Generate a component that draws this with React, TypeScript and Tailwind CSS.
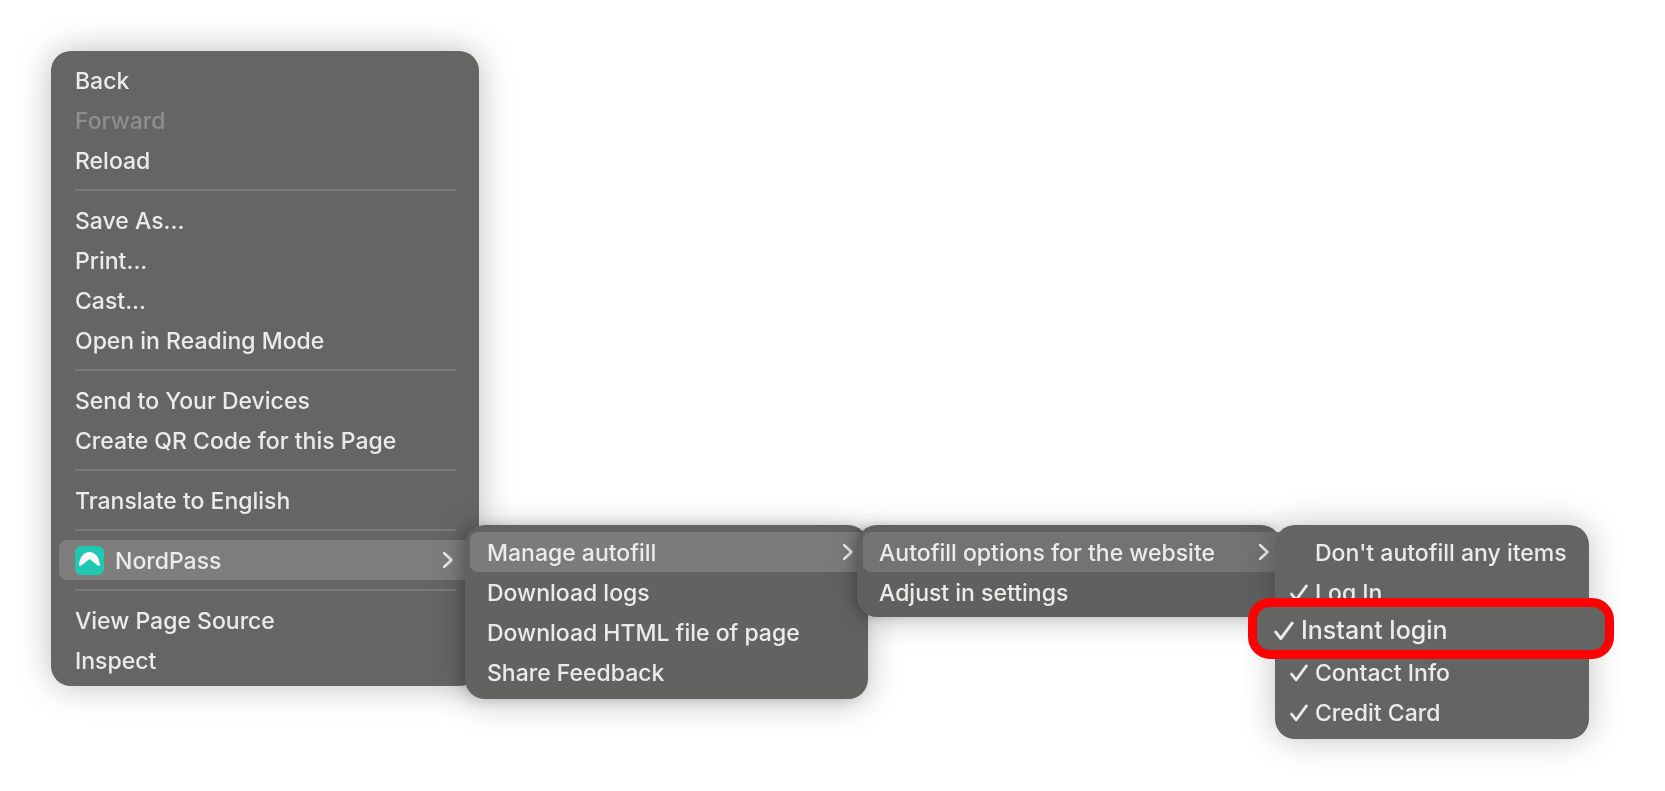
const Chevron = () => (
  <svg width="12" height="18" viewBox="0 0 12 18" fill="none" className="shrink-0">
    <path d="M2 2l7.5 7L2 16" stroke="#e9e9e8" strokeWidth="2.5" strokeLinecap="round" strokeLinejoin="round" />
  </svg>
);

const Check = ({ size = 18 }: { size?: number }) => (
  <svg width={size} height={size} viewBox="0 0 17 17" fill="none" className="shrink-0">
    <path d="M1.500 9.500l4.300 5.500L15.500 1.800" stroke="#e9e9e8" strokeWidth="2.600" strokeLinecap="round" strokeLinejoin="round" />
  </svg>
);

const NordLogo = () => (
  <svg width="29" height="29" viewBox="0 0 29 29" className="shrink-0">
    <rect width="29" height="29" rx="6" fill="#1fc8ae" />
    <path d="M4 19.500C4.500 11 9 6 14.500 6S24.500 11 25 19.500c-1 .7-2.200.4-3-.4l-7.500-6.100L7 19.100c-.8.800-2 1.100-3 .4z" fill="#f6fbfa" />
  </svg>
);

const Sep = () => (
  <div className="h-5 flex items-center pb-px ml-[16px] mr-[15px]">
    <div className="h-[2px] w-full bg-[#7a7977]" />
  </div>
);

const Row = ({ children, dim }: { children: React.ReactNode; dim?: boolean }) => (
  <div className={`h-10 flex items-center pt-[2px] pl-[16px] whitespace-nowrap ${dim ? "text-[#8f8e8c]" : "text-[#ebebea]"}`}>
    {children}
  </div>
);

export default function App() {
  return (
    <div
      className="relative w-[1665px] h-[791px] overflow-hidden bg-white text-[23px] font-medium leading-none blur-[0.4px]"
      style={{ fontFamily: "Inter, 'Liberation Sans', sans-serif" }}
    >
      {/* main menu */}
      <div className="absolute left-[51px] top-[51px] w-[428px] h-[635px] rounded-[20px] bg-[#666563] pt-[9px] shadow-[0_0_34px_rgba(0,0,0,0.26)]">
        <div className="mx-2">
          <Row>Back</Row>
          <Row dim>Forward</Row>
          <Row>Reload</Row>
          <Sep />
          <Row>Save As...</Row>
          <Row>Print...</Row>
          <Row>Cast...</Row>
          <Row>Open in Reading Mode</Row>
          <Sep />
          <Row>Send to Your Devices</Row>
          <Row>Create QR Code for this Page</Row>
          <Sep />
          <Row>Translate to English</Row>
          <Sep />
          <div className="h-10 flex items-center rounded-l-lg bg-[#7e7d7b] pl-[16px] pr-[17px] gap-[11px] text-[#ebebea]">
            <NordLogo />
            <span className="flex-1 pt-[2px]">NordPass</span>
            <Chevron />
          </div>
          <Sep />
          <Row>View Page Source</Row>
          <Row>Inspect</Row>
        </div>
      </div>

      {/* first submenu */}
      <div className="absolute left-[465px] top-[525px] w-[403px] h-[174px] rounded-[20px] bg-[#626261] pt-[7px] shadow-[-4px_0_12px_rgba(0,0,0,0.16),0_4px_34px_rgba(0,0,0,0.24)]">
        <div className="ml-[5px] mr-[3px]">
          <div className="h-10 flex items-center rounded-lg bg-[#7b7b79] pl-[17px] pr-[11px] justify-between text-[#ebebea]">
            <span className="pt-[2px]">Manage autofill</span>
            <Chevron />
          </div>
          <div className="pl-px">
            <Row>Download logs</Row>
            <Row>Download HTML file of page</Row>
            <Row>Share Feedback</Row>
          </div>
        </div>
      </div>

      {/* second submenu */}
      <div className="absolute left-[857px] top-[525px] w-[424px] h-[92px] rounded-[20px] bg-[#606060] pt-[7px] shadow-[-3px_0_10px_rgba(0,0,0,0.16),0_4px_30px_rgba(0,0,0,0.22)]">
        <div className="ml-[6px]">
          <div className="h-10 flex items-center rounded-l-lg bg-[#737372] pl-[16px] pr-[11px] justify-between text-[#ebebea]">
            <span className="pt-[2px]">Autofill options for the website</span>
            <Chevron />
          </div>
          <Row>Adjust in settings</Row>
        </div>
      </div>

      {/* third submenu */}
      <div className="absolute left-[1275px] top-[525px] w-[314px] h-[214px] rounded-[20px] bg-[#646463] pt-[7px] text-[#ebebea] shadow-[0_0_34px_rgba(0,0,0,0.24)]">
        <div className="h-10 flex items-center pt-[2px] pl-[40px] whitespace-nowrap">Don't autofill any items</div>
        <div className="h-10 flex items-center pt-[2px] pl-[15px] gap-[7px] whitespace-nowrap"><Check />Log In</div>
        <div className="h-10" />
        <div className="h-10 flex items-center pt-[2px] pl-[15px] gap-[7px] whitespace-nowrap"><Check />Contact Info</div>
        <div className="h-10 flex items-center pt-[2px] pl-[15px] gap-[7px] whitespace-nowrap"><Check />Credit Card</div>
      </div>

      {/* highlight callout */}
      <div className="absolute left-[1248px] top-[598px] w-[366px] h-[61px] rounded-[22px] border-[9px] border-[#ff0000] bg-[#646463] flex items-center pt-[4px] pl-[17px] gap-[7px] text-[25px] text-[#ebebea]">
        <Check size={20} />
        Instant login
      </div>
    </div>
  );
}
